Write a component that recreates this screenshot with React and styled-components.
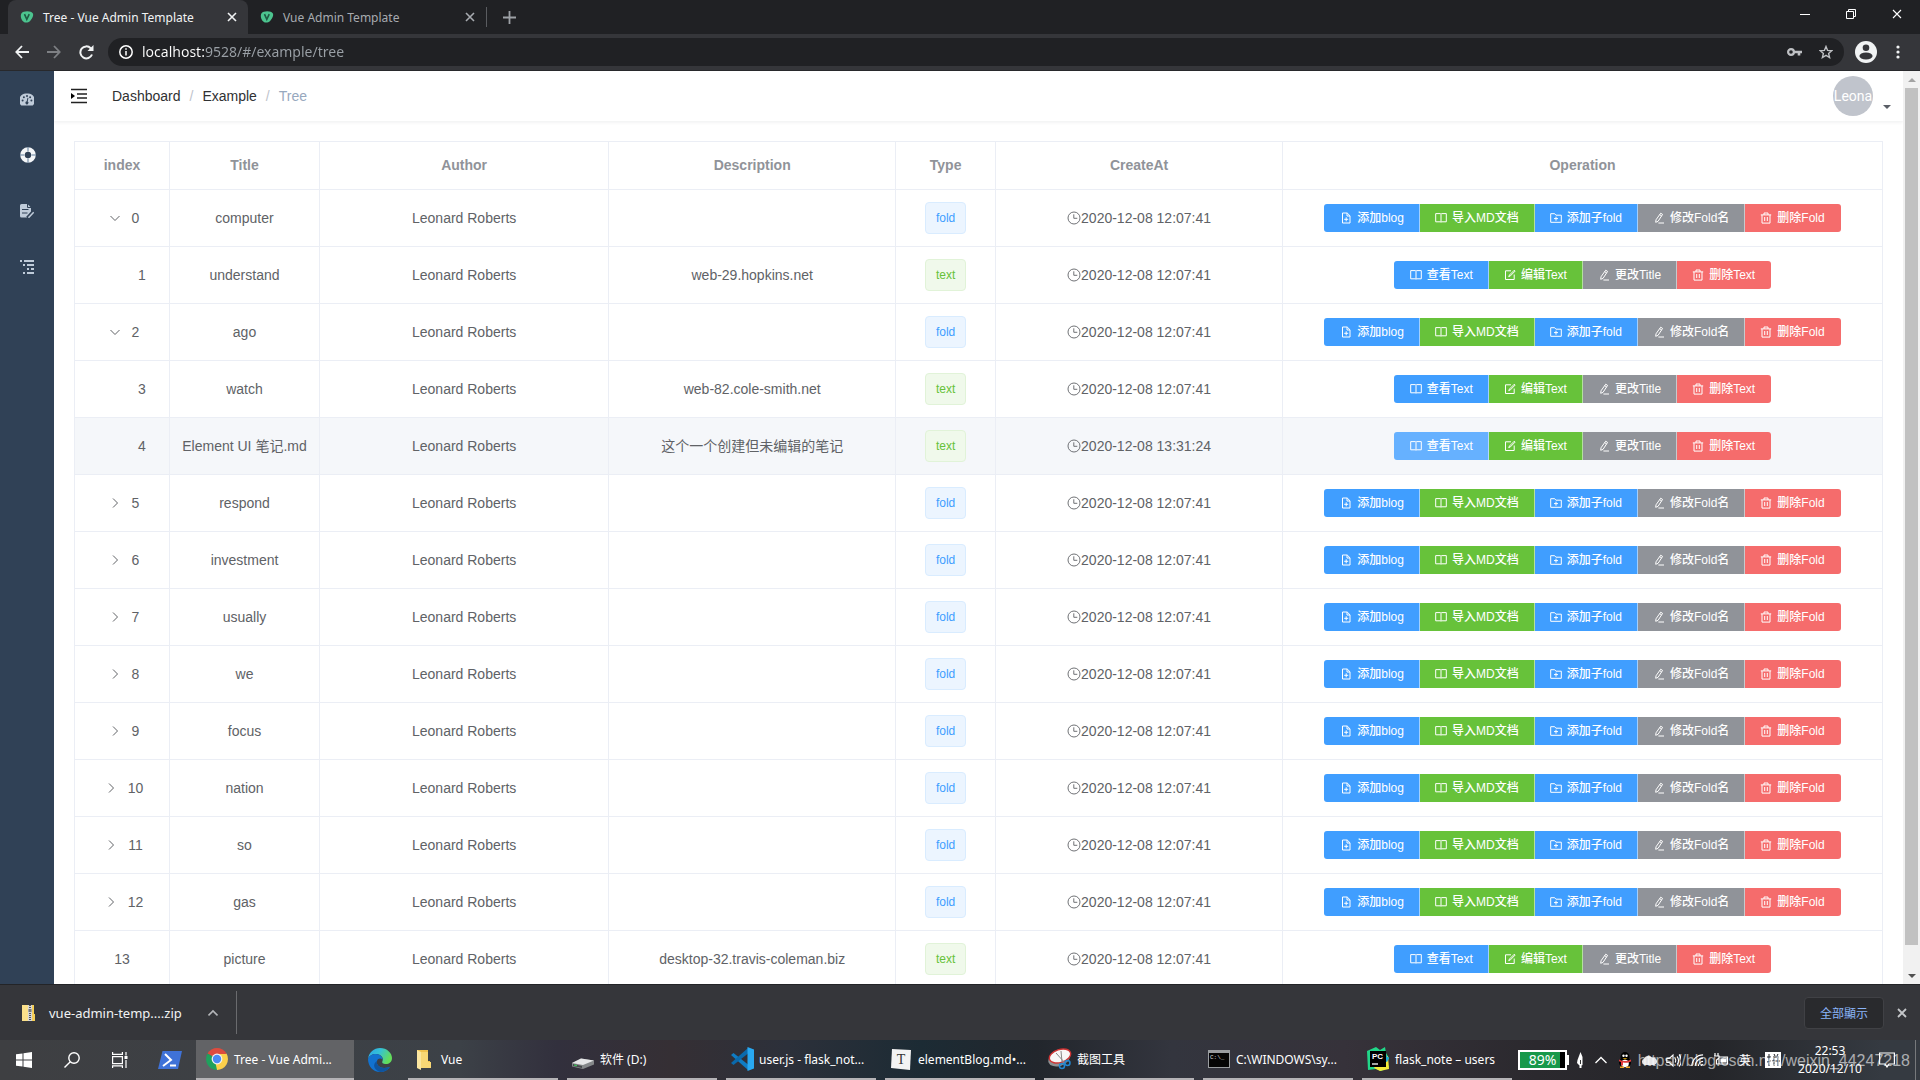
import React from 'react';
import styled, { createGlobalStyle, css } from 'styled-components';

const GlobalStyle = createGlobalStyle`
  * {
    box-sizing: border-box;
  }

  body {
    margin: 0;
    background: #fff;
    color: #606266;
    font-family: 'Liberation Sans', 'Noto Sans CJK SC', sans-serif;
    font-size: 14px;
  }

  button {
    margin: 0;
    padding: 0;
    border: 0;
    background: none;
    color: inherit;
    font: inherit;
    cursor: pointer;
  }

  a {
    color: inherit;
    text-decoration: none;
  }

  svg {
    display: block;
    flex: none;
  }
`;

const uiFont = css`
  font-family: 'Noto Sans', 'Noto Sans CJK SC', sans-serif;
`;

/* ---------- Window frame ---------- */

const Screen = styled.div`
  display: flex;
  flex-direction: column;
  height: 100vh;
  overflow: hidden;
`;

const TabStrip = styled.header`
  ${uiFont}
  display: flex;
  flex: none;
  height: 34px;
  padding-left: 8px;
  background: #202124;
  color: #9da1a6;
  font-size: 12px;
`;

const BrowserTab = styled.div`
  display: flex;
  align-items: center;
  width: ${(p) => (p.$active ? '240px' : '238px')};
  padding: 0 11px 0 12px;
  border-radius: 8px 8px 0 0;
  background: ${(p) => (p.$active ? '#35363a' : 'transparent')};
  color: ${(p) => (p.$active ? '#f1f3f4' : '#a7abb0')};
`;

const TabTitle = styled.button`
  flex: 1;
  display: flex;
  align-items: center;
  gap: 9px;
  height: 28px;
  white-space: nowrap;
`;

const TabDivider = styled.span`
  align-self: center;
  width: 1px;
  height: 20px;
  margin-right: 16px;
  background: #5a5c60;
`;

const WindowButtons = styled.div`
  display: flex;
  margin-left: auto;
  color: #fff;
`;

const WindowButton = styled.button`
  display: flex;
  align-items: center;
  justify-content: center;
  width: 46px;
  height: 28px;
`;

const Toolbar = styled.div`
  ${uiFont}
  display: flex;
  align-items: center;
  flex: none;
  height: 37px;
  padding: 0 6px;
  border-bottom: 1px solid #28292c;
  background: #35363a;
  color: #fff;
`;

const NavButton = styled.button`
  display: flex;
  align-items: center;
  justify-content: center;
  width: 32px;
  height: 28px;
  color: ${(p) => (p.$dim ? '#7e8084' : '#f1f3f4')};
`;

const ProfileButton = styled.button`
  margin-right: 5px;
`;

const Omnibox = styled.label`
  display: flex;
  align-items: center;
  flex: 1;
  gap: 9px;
  height: 28px;
  margin: 0 11px 0 6px;
  padding: 0 11px;
  border-radius: 14px;
  background: #202124;
`;

/* host part is bright, the rest of the url is dimmed */
const UrlInput = styled.input`
  ${uiFont}
  flex: 1;
  min-width: 0;
  padding: 0;
  border: 0;
  outline: 0;
  background: linear-gradient(90deg, #fff 62px, #9aa0a6 62px);
  background-clip: text;
  -webkit-text-fill-color: transparent;
  color: #fff;
  font-size: 14px;
  line-height: 20px;
`;

const OmniIcons = styled.span`
  display: flex;
  align-items: center;
  gap: 17px;
  color: #bfc1c4;
`;

/* ---------- Page ---------- */

const Page = styled.div`
  display: flex;
  flex: 1;
  min-height: 0;
`;

const Sidebar = styled.nav`
  flex: none;
  width: 54px;
  background: #304156;
`;

const SidebarLink = styled.a`
  display: flex;
  align-items: center;
  height: 56px;
  padding-left: 20px;
  color: ${(p) => (p.$bright ? '#f4f6f8' : '#bfcbd9')};
`;

const Main = styled.main`
  flex: 1;
  min-width: 0;
  overflow: hidden;
`;

const Navbar = styled.div`
  display: flex;
  align-items: center;
  height: 50px;
  padding: 0 12px 0 15px;
  background: #fff;
  box-shadow: 0 1px 4px rgba(0, 21, 41, 0.08);
`;

const Breadcrumb = styled.nav`
  display: flex;
  gap: 9px;
  margin-left: 23px;
  color: #303133;

  i {
    color: #c0c4cc;
    font-style: normal;
  }

  span {
    color: #97a8be;
  }
`;

const UserMenu = styled.button`
  display: flex;
  align-items: flex-end;
  gap: 10px;
  margin-left: auto;
`;

const Avatar = styled.span`
  display: flex;
  align-items: center;
  justify-content: center;
  width: 40px;
  height: 40px;
  border-radius: 50%;
  overflow: hidden;
  background: #c0c4cc;
  color: #fff;
  font-family: Roboto, sans-serif;
`;

const Caret = styled.span`
  margin-bottom: 7px;
  border: 4px solid transparent;
  border-top-color: #5a5e66;
  border-bottom: 0;
`;

const TableWrap = styled.section`
  padding: 20px;
`;

const Table = styled.table`
  width: 100%;
  table-layout: fixed;
  border-spacing: 0;
  border-top: 1px solid #ebeef5;
  border-left: 1px solid #ebeef5;
  line-height: 23px;
  text-align: center;
`;

const Th = styled.th`
  width: ${(p) => p.$width || 'auto'};
  padding: 12px 10px;
  border-right: 1px solid #ebeef5;
  border-bottom: 1px solid #ebeef5;
  color: #909399;
`;

const Row = styled.tr`
  background: ${(p) => (p.$hover ? '#f5f7fa' : '#fff')};
`;

const Td = styled.td`
  height: 57px;
  padding: 0 10px;
  border-right: 1px solid #ebeef5;
  border-bottom: 1px solid #ebeef5;
  white-space: nowrap;
`;

const IndexContent = styled.div`
  display: flex;
  align-items: center;
  justify-content: center;
  padding-left: ${(p) => (p.$nested ? '40px' : '0')};
`;

const Expander = styled.button`
  display: flex;
  align-items: center;
  justify-content: center;
  width: 20px;
  height: 20px;
  margin-right: 7px;

  svg {
    transform: ${(p) => (p.$open ? 'rotate(90deg)' : 'none')};
  }
`;

const Tag = styled.span`
  display: inline-block;
  height: 32px;
  padding: 0 10px;
  border: 1px solid ${(p) => (p.$kind === 'fold' ? '#d9ecff' : '#e1f3d8')};
  border-radius: 4px;
  background: ${(p) => (p.$kind === 'fold' ? '#ecf5ff' : '#f0f9eb')};
  color: ${(p) => (p.$kind === 'fold' ? '#409eff' : '#67c23a')};
  font-size: 12px;
  line-height: 30px;
  vertical-align: middle;
`;

const Created = styled.span`
  display: flex;
  align-items: center;
  justify-content: center;
`;

const ButtonGroup = styled.div`
  display: flex;
  justify-content: center;
`;

const tones = {
  primary: '#409eff',
  primaryHover: '#66b1ff',
  success: '#67c23a',
  info: '#909399',
  danger: '#f56c6c',
};

const ActionButton = styled.button`
  display: flex;
  align-items: center;
  gap: 5px;
  height: 28px;
  padding: 0 15px;
  border-right: 1px solid rgba(255, 255, 255, 0.5);
  background: ${(p) => tones[p.$tone]};
  color: #fff;
  font-size: 12px;
  font-weight: 500;
  line-height: 12px;

  &:first-child {
    padding-left: 16px;
    border-radius: 3px 0 0 3px;
  }

  &:last-child {
    padding-right: 16px;
    border-right: 0;
    border-radius: 0 3px 3px 0;
  }
`;

const Scrollbar = styled.div`
  display: flex;
  flex-direction: column;
  flex: none;
  width: 17px;
  background: #f1f1f1;
`;

const ScrollArrow = styled.button`
  display: flex;
  align-items: center;
  justify-content: center;
  height: 17px;
  color: ${(p) => (p.$dim ? '#a3a3a3' : '#505050')};
`;

const ScrollTrack = styled.div`
  flex: 1;
  padding: 0 2px;
`;

const ScrollThumb = styled.div`
  height: 97.5%;
  background: #c1c1c1;
`;

/* ---------- Downloads ---------- */

const DownloadBar = styled.footer`
  ${uiFont}
  display: flex;
  align-items: center;
  flex: none;
  height: 56px;
  padding: 0 13px 0 20px;
  border-top: 1px solid #232427;
  background: #35363a;
  color: #f1f3f4;
`;

const DownloadItem = styled.div`
  display: flex;
  align-items: center;
  width: 217px;
  height: 43px;
  padding-right: 18px;
  border-right: 1px solid #6a6b6e;
  font-size: 13px;

  a {
    flex: 1;
    margin-left: 13px;
  }

  button {
    color: #b4b6b9;
  }
`;

const ShowAll = styled.button`
  width: 80px;
  height: 32px;
  margin-left: auto;
  margin-right: 13px;
  border: 1px solid #404145;
  border-radius: 4px;
  background: #292a2d;
  color: #8ab4f8;
  font-size: 12px;
`;

const CloseBar = styled.button`
  color: #c4c6c9;
`;

/* ---------- Taskbar ---------- */

const Taskbar = styled.div`
  ${uiFont}
  position: relative;
  display: flex;
  flex: none;
  height: 40px;
  background: linear-gradient(
    90deg,
    #3e3f42 0%,
    #3c4147 24%,
    #32303d 29%,
    #352f34 35%,
    #2c303a 41%,
    #1c2b34 48%,
    #22262c 54%,
    #33353e 61%,
    #36323a 70%,
    #2b292e 80%,
    #242529 89%,
    #353a41 98%
  );
  color: #fff;
  font-size: 12px;
`;

const TaskIcon = styled.button`
  display: flex;
  align-items: center;
  justify-content: center;
  width: ${(p) => (p.$wide ? '51px' : '48px')};
`;

const TaskList = styled.div`
  display: flex;
  gap: 9px;
  margin-left: 3px;
`;

const TaskItem = styled.button`
  display: flex;
  align-items: center;
  gap: 5px;
  width: ${(p) => (p.$active ? '158px' : '150px')};
  margin-left: ${(p) => (p.$active ? '1px' : '0')};
  padding: 0 ${(p) => (p.$active ? '9px' : '4px')};
  border-bottom: 2px solid #b5b3b6;
  background: ${(p) => (p.$active ? '#626366' : 'transparent')};
  white-space: nowrap;
`;

const Tray = styled.div`
  display: flex;
  align-items: center;
  margin-left: auto;
`;

const Battery = styled.span`
  width: 49px;
  height: 20px;
  border: 2px solid #fff;
  background: linear-gradient(90deg, #18984a 88%, #000 88%);
  font-size: 14px;
  line-height: 16px;
  text-align: center;
`;

const BatteryNub = styled.span`
  width: 2px;
  height: 10px;
  margin-right: 2px;
  background: #fff;
`;

const TrayIcon = styled.button`
  display: flex;
  align-items: center;
  justify-content: center;
  width: ${(p) => p.$width || 24}px;
  height: 40px;
`;

const Clock = styled.time`
  width: 82px;
  font-size: 12px;
  line-height: 18px;
  text-align: center;
`;

const PeekEdge = styled.span`
  width: 1px;
  height: 40px;
  margin: 0 4px 0 12px;
  background: #77797c;
`;

const Watermark = styled.span`
  position: absolute;
  right: 10px;
  top: 10px;
  color: rgba(255, 255, 255, 0.6);
  font-family: 'Liberation Sans', sans-serif;
  font-size: 16px;
  line-height: 22px;
  pointer-events: none;
`;

/* ---------- Icons ---------- */

const Stroke = ({ size = 12, box = 12, w = 1, children, ...rest }) => (
  <svg
    width={size}
    height={size}
    viewBox={`0 0 ${box} ${box}`}
    fill="none"
    stroke="currentColor"
    strokeWidth={w}
    aria-hidden="true"
    {...rest}
  >
    {children}
  </svg>
);

const CloseIcon = ({ size = 10, w = 1.6 }) => (
  <Stroke size={size} box={10} w={w}><path d="M1 1l8 8M9 1L1 9" /></Stroke>
);

const Favicon = () => (
  <svg width="14" height="14" viewBox="0 0 15 14" aria-hidden="true">
    <path d="M4 1.400C7.500 0 12.500 .8 13.800 3.200c1 2-.6 5.600-3 8-1.900 1.900-5 2.500-7 .9C1.700 10.500.6 7.800.9 5.200 1.100 3.300 2.200 2 4 1.400z" fill="#4cc48f" />
    <path d="M4.800 4l2.500 5.500L9.900 4" fill="none" stroke="#1f5a43" strokeWidth="1.700" />
  </svg>
);

const actionIcons = {
  docAdd: <path d="M2.500 1h4.700l2.800 2.800V11h-7.500zM7 1v3h3M4.200 7.300h4M6.200 5.300v4" />,
  reading: <path d="M.7 1.600h4.600l.7.600.7-.6h4.600v8.200H6.700l-.7.600-.7-.6H.7zM6 2.200v8" />,
  folderAdd: <path d="M.7 1.700h4l1.200 1.500h5.400v7.100H.7zM4 6.600h4M6 4.700v4" />,
  edit: <path d="M7.700 1.200l1.900 1.200-4.600 7-2.300.9.300-2.500zM6.700 2.700l1.900 1.200M5.400 11h5.600" />,
  editOutline: <path d="M7 1.800H1.500v8.700h8.700V5.500M10.300 1.200L5.500 6l-.8 1.600 1.700-.7 4.700-4.800z" />,
  trash: <path d="M.8 2.900h10.400M4 2.900V1h4v1.900M2 2.900v8.200h8V2.900M4.700 5v4M7.300 5v4" />,
};

const ClockIcon = () => (
  <Stroke size={14} box={14} w={0.9}>
    <circle cx="7" cy="7" r="6" />
    <path d="M6.800 3.300v4h3.500" />
  </Stroke>
);

const DashboardIcon = () => (
  <svg width="14" height="13" viewBox="0 0 14 13" aria-hidden="true">
    <path d="M1.300 12.500A7 7 0 0 1 7 .5a7 7 0 0 1 5.700 12z" fill="currentColor" />
    <g fill="#304156">
      <circle cx="2.600" cy="7.500" r="1" />
      <circle cx="3.900" cy="4.300" r="1" />
      <circle cx="7" cy="2.900" r="1" />
      <circle cx="10.100" cy="4.300" r="1" />
      <circle cx="11.400" cy="7.500" r="1" />
      <path d="M7.500 4.700l.9.300-.7 3.500a1.500 1.500 0 1 1-1-.2z" />
    </g>
  </svg>
);

const LifebuoyIcon = () => (
  <svg width="16" height="16" viewBox="0 0 16 16" aria-hidden="true">
    <circle cx="8" cy="8" r="5.500" fill="none" stroke="currentColor" strokeWidth="4.600" />
    <path d="M8 0v4.500M8 11.500V16M0 8h4.500M11.500 8H16" stroke="#5e7c9b" strokeWidth="1" />
  </svg>
);

const FormIcon = () => (
  <svg width="14" height="14" viewBox="0 0 14 14" aria-hidden="true">
    <path d="M1.500 0H7.500L11 3.500V8.500L7 13.500H1.500A1.500 1.500 0 0 1 0 12V1.500A1.500 1.500 0 0 1 1.500 0z" fill="currentColor" />
    <path d="M7.500 0v3.500H11M2 5.500h6.500M2 9h5.500" stroke="#304156" fill="none" />
    <path d="M7.500 14L13 8" stroke="#304156" strokeWidth="3.500" />
    <path d="M8.500 13.700L13.700 8.200" stroke="currentColor" strokeWidth="1.600" />
  </svg>
);

const TreeIcon = () => (
  <svg width="14" height="14" viewBox="0 0 14 14" fill="currentColor" aria-hidden="true">
    <path d="M0 0h2v2H0zM4 0h10v2H4zM3 4h2v2H3zM7 4h7v2H7zM7 8h2v2H7zM11 8h3v2h-3zM3 12h2v2H3zM7 12h7v2H7z" />
  </svg>
);

const HamburgerIcon = () => (
  <svg width="20" height="16" viewBox="0 0 20 16" aria-hidden="true">
    <path d="M2 1.500h16M8 6h10M8 10h10M2 14.500h16" stroke="#222" strokeWidth="1.500" />
    <path d="M2 5l4 3-4 3z" fill="#000" />
  </svg>
);

const ZipIcon = () => (
  <svg width="16" height="16" viewBox="0 0 16 16" aria-hidden="true">
    <path d="M2 0h12v9h1v7H2z" fill="#f6cf57" />
    <path d="M2 0h6v16H2z" fill="#fbe08a" />
    <path d="M8 0h4v16H8z" fill="#d8d8d8" />
    <path d="M10 0v16" stroke="#555" strokeWidth="2" strokeDasharray="1 1" />
    <path d="M8.500 4h3v3h-3z" fill="#777" />
  </svg>
);

const taskIcons = {
  chrome: (
    <svg width="24" height="24" viewBox="0 0 24 24" aria-hidden="true">
      <path d="M12 12L2.500 6.500A11 11 0 0 1 21.500 6.500z" fill="#dd4b3e" />
      <path d="M12 12l9.500-5.500A11 11 0 0 1 12 23z" fill="#fdd04b" />
      <path d="M12 12v11A11 11 0 0 1 2.500 6.500z" fill="#1fa15d" />
      <path d="M12 7h9.800L17 13.500z" fill="#fdd04b" />
      <path d="M16.500 14.500L12 23l-1.500-7z" fill="#fdd04b" />
      <circle cx="12" cy="12" r="5.400" fill="#f2f2f2" />
      <circle cx="12" cy="12" r="4.200" fill="#4a8af4" />
    </svg>
  ),
  folder: (
    <svg width="24" height="24" viewBox="0 0 24 24" aria-hidden="true">
      <path d="M5 3h11v11h2v7H5z" fill="#f0c24e" />
      <path d="M5 3l4 2v18l-4-2z" fill="#fbe6a0" />
      <path d="M9 5h7v10h3v6H9z" fill="#f8d775" />
    </svg>
  ),
  drive: (
    <svg width="24" height="24" viewBox="0 0 24 24" aria-hidden="true">
      <path d="M1 16l9-4.500 13 2v4L12 22 1 19.500z" fill="#85888a" />
      <path d="M1 16l9-4.500 13 2L12 18z" fill="#e6e7e8" />
      <path d="M2 17l9 2v2l-9-2z" fill="#45494b" />
      <path d="M3 18l3 .7" stroke="#38d25a" />
    </svg>
  ),
  vscode: (
    <svg width="24" height="24" viewBox="0 0 24 24" aria-hidden="true">
      <path d="M1 8l2.500-2L18 17.500V23z" fill="#0f7cc4" />
      <path d="M1 16l2.500 2L18 6.500V1z" fill="#0a6aad" />
      <path d="M17.500 0L24 2.500v19L17.500 24z" fill="#29a8f1" />
    </svg>
  ),
  typora: (
    <svg width="24" height="24" viewBox="0 0 24 24" aria-hidden="true">
      <path d="M3 2l19 1-1 20-19-2z" fill="#f3f3f3" />
      <text x="12" y="17" textAnchor="middle" fontFamily="Liberation Serif, serif" fontSize="14" fill="#333">T</text>
    </svg>
  ),
  snip: (
    <svg width="24" height="24" viewBox="0 0 24 24" aria-hidden="true">
      <ellipse cx="11" cy="12" rx="11" ry="7" transform="rotate(-18 11 12)" fill="#8d9092" />
      <ellipse cx="12" cy="9" rx="11" ry="6.500" transform="rotate(-18 12 9)" fill="#f7f7f7" stroke="#cf3434" strokeWidth="1.400" />
      <path d="M8 6l9 10M13 4l1 11" stroke="#888" />
      <circle cx="14" cy="19" r="2.500" fill="none" stroke="#2386d1" strokeWidth="1.500" />
      <circle cx="19.500" cy="16" r="2.500" fill="none" stroke="#2386d1" strokeWidth="1.500" />
    </svg>
  ),
  cmd: (
    <svg width="24" height="24" viewBox="0 0 24 24" aria-hidden="true">
      <path d="M1 3h22v18H1z" fill="#9a9da0" />
      <path d="M2 6h20v14H2z" fill="#050505" />
      <text x="3" y="12" fontFamily="Liberation Mono, monospace" fontSize="6" fill="#ddd">C:\_</text>
    </svg>
  ),
  pycharm: (
    <svg width="24" height="24" viewBox="0 0 24 24" aria-hidden="true">
      <path d="M1 4l9-4 4 3 5-3 1 6 3 5-2 4 2 5-8 4-5-2-8 1z" fill="#21d789" />
      <path d="M13 14l9-5 1 13-9 2-6-3z" fill="#f4ec3a" />
      <path d="M18 7l5 4-2 4-3-1z" fill="#1aa8d8" />
      <path d="M4 4h16v16H4z" fill="#000" />
      <text x="6" y="12" fontFamily="Liberation Sans, sans-serif" fontSize="8" fontWeight="700" fill="#fff">PC</text>
      <path d="M6 17h6" stroke="#fff" strokeWidth="1.300" />
    </svg>
  ),
};

/* ---------- Data ---------- */

const folderActions = [
  { icon: 'docAdd', label: '添加blog', tone: 'primary' },
  { icon: 'reading', label: '导入MD文档', tone: 'success' },
  { icon: 'folderAdd', label: '添加子fold', tone: 'primary' },
  { icon: 'edit', label: '修改Fold名', tone: 'info' },
  { icon: 'trash', label: '删除Fold', tone: 'danger' },
];

const textActions = [
  { icon: 'reading', label: '查看Text', tone: 'primary' },
  { icon: 'editOutline', label: '编辑Text', tone: 'success' },
  { icon: 'edit', label: '更改Title', tone: 'info' },
  { icon: 'trash', label: '删除Text', tone: 'danger' },
];

const defaultDate = '2020-12-08 12:07:41';

const rows = [
  { title: 'computer', type: 'fold', open: true },
  { title: 'understand', type: 'text', nested: true, description: 'web-29.hopkins.net' },
  { title: 'ago', type: 'fold', open: true },
  { title: 'watch', type: 'text', nested: true, description: 'web-82.cole-smith.net' },
  {
    title: 'Element UI 笔记.md',
    type: 'text',
    nested: true,
    description: '这个一个创建但未编辑的笔记',
    createdAt: '2020-12-08 13:31:24',
    hover: true,
  },
  { title: 'respond', type: 'fold' },
  { title: 'investment', type: 'fold' },
  { title: 'usually', type: 'fold' },
  { title: 'we', type: 'fold' },
  { title: 'focus', type: 'fold' },
  { title: 'nation', type: 'fold' },
  { title: 'so', type: 'fold' },
  { title: 'gas', type: 'fold' },
  { title: 'picture', type: 'text', description: 'desktop-32.travis-coleman.biz' },
];

const columns = [
  { name: 'index', width: '95px' },
  { name: 'Title', width: '150px' },
  { name: 'Author', width: '16%' },
  { name: 'Description' },
  { name: 'Type', width: '100px' },
  { name: 'CreateAt' },
  { name: 'Operation', width: '600px' },
];

const tasks = [
  { icon: 'folder', label: 'Vue' },
  { icon: 'drive', label: '软件 (D:)' },
  { icon: 'vscode', label: 'user.js - flask_not...' },
  { icon: 'typora', label: 'elementBlog.md•...' },
  { icon: 'snip', label: '截图工具' },
  { icon: 'cmd', label: 'C:\\WINDOWS\\sy...' },
  { icon: 'pycharm', label: 'flask_note – users' },
];

/* ---------- Sections ---------- */

const BrowserChrome = () => (
  <>
    <TabStrip>
      <BrowserTab $active>
        <TabTitle><Favicon />Tree - Vue Admin Template</TabTitle>
        <button aria-label="Close tab"><CloseIcon /></button>
      </BrowserTab>
      <BrowserTab>
        <TabTitle><Favicon />Vue Admin Template</TabTitle>
        <button aria-label="Close tab"><CloseIcon /></button>
      </BrowserTab>
      <TabDivider />
      <button aria-label="New tab">
        <Stroke size={13} box={13} w={1.8}><path d="M6.500 0v13M0 6.500h13" /></Stroke>
      </button>
      <WindowButtons>
        <WindowButton aria-label="Minimize">
          <Stroke size={10} box={10}><path d="M0 5.500h10" /></Stroke>
        </WindowButton>
        <WindowButton aria-label="Restore">
          <Stroke size={10} box={10}><path d="M.5 2.500h7v7h-7zM2.500 2V.5h7v7H8" /></Stroke>
        </WindowButton>
        <WindowButton aria-label="Close"><CloseIcon w={1.1} /></WindowButton>
      </WindowButtons>
    </TabStrip>
    <Toolbar>
      <NavButton aria-label="Back">
        <Stroke size={14} box={14} w={1.8}><path d="M14 7H1.500M7 1L1.300 7 7 13" /></Stroke>
      </NavButton>
      <NavButton aria-label="Forward" $dim>
        <Stroke size={14} box={14} w={1.8}><path d="M0 7h12.500M7 1l5.700 6L7 13" /></Stroke>
      </NavButton>
      <NavButton aria-label="Reload">
        <Stroke size={15} box={15} w={2}>
          <path d="M13 9.500A6 6 0 1 1 11.700 3.200L13 4.500" />
          <path d="M14.500 0v6h-6z" fill="currentColor" stroke="none" />
        </Stroke>
      </NavButton>
      <Omnibox>
        <Stroke size={14} box={14} w={1.5}>
          <circle cx="7" cy="7" r="6.200" />
          <path d="M7 6v4.500M7 3.200v1.600" />
        </Stroke>
        <UrlInput aria-label="Address" defaultValue="localhost:9528/#/example/tree" />
        <OmniIcons>
          <svg width="15" height="10" viewBox="0 0 15 10" fill="none" stroke="currentColor" strokeWidth="2.200" aria-hidden="true">
            <circle cx="4" cy="5" r="2.900" />
            <path d="M7 5h8M12 5v3.500" strokeWidth="2.600" />
          </svg>
          <Stroke size={14} box={14} w={1.4}>
            <path d="M7 1.500l1.600 3.900 4.200.3-3.200 2.700 1 4.100L7 10.300l-3.600 2.200 1-4.100-3.200-2.700 4.200-.3z" />
          </Stroke>
        </OmniIcons>
      </Omnibox>
      <ProfileButton aria-label="Profile">
        <svg width="22" height="22" viewBox="0 0 22 22" aria-hidden="true">
          <circle cx="11" cy="11" r="11" fill="#f1f3f4" />
          <circle cx="11" cy="6.800" r="3.300" fill="#35363a" />
          <ellipse cx="11" cy="15" rx="6.600" ry="3.500" fill="#35363a" />
        </svg>
      </ProfileButton>
      <NavButton aria-label="Menu">
        <svg width="4" height="14" viewBox="0 0 4 14" fill="currentColor" aria-hidden="true">
          <circle cx="2" cy="2" r="1.600" />
          <circle cx="2" cy="7" r="1.600" />
          <circle cx="2" cy="12" r="1.600" />
        </svg>
      </NavButton>
    </Toolbar>
  </>
);

const TreeRow = ({ row, index }) => {
  const actions = row.type === 'fold' ? folderActions : textActions;

  return (
    <Row $hover={row.hover}>
      <Td>
        <IndexContent $nested={row.nested}>
          {row.type === 'fold' && (
            <Expander $open={row.open} aria-label={row.open ? 'Collapse' : 'Expand'}>
              <Stroke><path d="M4 1.500L8.500 6 4 10.500" /></Stroke>
            </Expander>
          )}
          {index}
        </IndexContent>
      </Td>
      <Td>{row.title}</Td>
      <Td>Leonard Roberts</Td>
      <Td>{row.description}</Td>
      <Td><Tag $kind={row.type}>{row.type}</Tag></Td>
      <Td>
        <Created><ClockIcon />{row.createdAt || defaultDate}</Created>
      </Td>
      <Td>
        <ButtonGroup>
          {actions.map((action, i) => (
            <ActionButton
              key={action.label}
              $tone={row.hover && i === 0 ? 'primaryHover' : action.tone}
            >
              <Stroke w={1}>{actionIcons[action.icon]}</Stroke>
              {action.label}
            </ActionButton>
          ))}
        </ButtonGroup>
      </Td>
    </Row>
  );
};

const AdminPage = () => (
  <Page>
    <Sidebar>
      <SidebarLink href="#/dashboard" aria-label="Dashboard"><DashboardIcon /></SidebarLink>
      <SidebarLink href="#/example" aria-label="Example" $bright><LifebuoyIcon /></SidebarLink>
      <SidebarLink href="#/form" aria-label="Form"><FormIcon /></SidebarLink>
      <SidebarLink href="#/nested" aria-label="Nested"><TreeIcon /></SidebarLink>
    </Sidebar>
    <Main>
      <Navbar>
        <button aria-label="Toggle sidebar"><HamburgerIcon /></button>
        <Breadcrumb aria-label="Breadcrumb">
          <a href="#/dashboard">Dashboard</a>
          <i>/</i>
          <a href="#/example">Example</a>
          <i>/</i>
          <span>Tree</span>
        </Breadcrumb>
        <UserMenu aria-label="User menu">
          <Avatar>Leona</Avatar>
          <Caret />
        </UserMenu>
      </Navbar>
      <TableWrap>
        <Table>
          <thead>
            <tr>
              {columns.map((col) => (
                <Th key={col.name} $width={col.width}>{col.name}</Th>
              ))}
            </tr>
          </thead>
          <tbody>
            {rows.map((row, i) => (
              <TreeRow key={row.title} row={row} index={i} />
            ))}
          </tbody>
        </Table>
      </TableWrap>
    </Main>
    <Scrollbar>
      <ScrollArrow aria-label="Scroll up" $dim>
        <svg width="8" height="4" viewBox="0 0 8 4" aria-hidden="true"><path d="M0 4l4-4 4 4z" fill="currentColor" /></svg>
      </ScrollArrow>
      <ScrollTrack><ScrollThumb /></ScrollTrack>
      <ScrollArrow aria-label="Scroll down">
        <svg width="8" height="4" viewBox="0 0 8 4" aria-hidden="true"><path d="M0 0l4 4 4-4z" fill="currentColor" /></svg>
      </ScrollArrow>
    </Scrollbar>
  </Page>
);

const Downloads = () => (
  <DownloadBar>
    <DownloadItem>
      <ZipIcon />
      <a href="#download">vue-admin-temp....zip</a>
      <button aria-label="Download options">
        <Stroke size={10} box={10} w={1.6}><path d="M.5 7.500L5 3l4.500 4.500" /></Stroke>
      </button>
    </DownloadItem>
    <ShowAll>全部顯示</ShowAll>
    <CloseBar aria-label="Close downloads"><CloseIcon w={1.8} /></CloseBar>
  </DownloadBar>
);

const WindowsTaskbar = () => (
  <Taskbar>
    <TaskIcon aria-label="Start">
      <svg width="16" height="16" viewBox="0 0 16 16" fill="#fff" aria-hidden="true">
        <path d="M0 2.300L6.500 1.400v6.100H0zM7.500 1.200L16 0v7.500H7.500zM0 8.500h6.500v6.100L0 13.700zM7.500 8.500H16V16l-8.500-1.200z" />
      </svg>
    </TaskIcon>
    <TaskIcon aria-label="Search">
      <Stroke size={16} box={16} w={1.4}><circle cx="10" cy="6" r="5.200" /><path d="M6.300 9.700L.5 15.500" /></Stroke>
    </TaskIcon>
    <TaskIcon aria-label="Task view">
      <Stroke size={16} box={16} w={1.2}>
        <path d="M.6 4.600h9.800v7H.6zM.6 0v2.400h9.800V0M.6 16v-2.200h9.800V16M14 0v3.500M14 8v8" />
        <path d="M12.500 4h3v3h-3z" fill="currentColor" stroke="none" />
      </Stroke>
    </TaskIcon>
    <TaskIcon aria-label="PowerShell" $wide>
      <svg width="24" height="18" viewBox="0 0 24 18" aria-hidden="true">
        <path d="M4.500 0H24l-4 18H0z" fill="#3f72d8" />
        <path d="M7 3l6 6-8 6M12 14.500h6" fill="none" stroke="#fff" strokeWidth="2" />
      </svg>
    </TaskIcon>
    <TaskItem $active>{taskIcons.chrome}Tree - Vue Admi...</TaskItem>
    <TaskIcon aria-label="Edge" $wide>
      <svg width="24" height="24" viewBox="0 0 24 24" aria-hidden="true">
        <defs>
          <linearGradient id="edgeTop" x1="0" y1="0" x2="1" y2="0.400">
            <stop offset="0" stopColor="#2aa4e8" />
            <stop offset="0.500" stopColor="#35c1d6" />
            <stop offset="1" stopColor="#63dd5a" />
          </linearGradient>
        </defs>
        <path d="M0 11C1 4 6 0 12 0c7 0 12 5 12 10 0 4-3 6-6 6-3 0-4.500-1-3.500-3C16 10 13 6 8 6c-4 0-7 2-8 5z" fill="url(#edgeTop)" />
        <path d="M0 11c1-3 4-5 8-5 4 0 7 3 6.500 6-1.500-2-4.500-2-5.500 1-1 4 3 7 7 7 3 0 5-1 6-1-2 3-6 5-10 5C5 24 0 18 0 11z" fill="#1272cf" />
        <path d="M9 13c-1 4 3 7 7 7 3 0 5-1 6-1-2 3-6 5-10 5-6-2-8-8-3-11z" fill="#0f549e" />
      </svg>
    </TaskIcon>
    <TaskList>
      {tasks.map((task) => (
        <TaskItem key={task.label}>{taskIcons[task.icon]}{task.label}</TaskItem>
      ))}
    </TaskList>
    <Tray>
      <Battery>89%</Battery>
      <BatteryNub />
      <TrayIcon $width={18} aria-label="Pen">
        <svg width="8" height="16" viewBox="0 0 8 16" aria-hidden="true"><path d="M4.500 0L6.500 5v8l-1 .5V16h-2v-2.500L1 11 1.500 8z" fill="#fff" /><path d="M4.500 8v4" stroke="#333" /></svg>
      </TrayIcon>
      <TrayIcon aria-label="Hidden icons">
        <Stroke w={1.3}><path d="M.5 9L6 3.500 11.500 9" /></Stroke>
      </TrayIcon>
      <TrayIcon aria-label="QQ">
        <svg width="16" height="16" viewBox="0 0 16 16" aria-hidden="true">
          <ellipse cx="8" cy="5" rx="4.500" ry="5" fill="#000" />
          <ellipse cx="8" cy="10.500" rx="6" ry="5" fill="#000" />
          <ellipse cx="8" cy="11.500" rx="3.800" ry="3.800" fill="#fff" />
          <circle cx="6.500" cy="3.800" r="1.200" fill="#fff" />
          <circle cx="9.500" cy="3.800" r="1.200" fill="#fff" />
          <path d="M5.500 6.200h5l-2.500 1.300z" fill="#f5b400" />
          <path d="M2 7.500c4 2 8 2 12 0v2c-3 1.500-5 1.500-8 1v3H4v-3.500l-2-.8z" fill="#e33b3b" />
          <path d="M3 14.500h4V16H3zM9 14.500h4V16H9z" fill="#f5a623" />
        </svg>
      </TrayIcon>
      <TrayIcon aria-label="OneDrive">
        <svg width="16" height="10" viewBox="0 0 18 11" aria-hidden="true"><path d="M4 11a3.500 3.500 0 0 1-.5-6.800A5 5 0 0 1 12.500 3 4 4 0 0 1 15 11z" fill="#e4e4e6" /></svg>
      </TrayIcon>
      <TrayIcon aria-label="Volume">
        <Stroke size={15} box={15} w={1.1}><path d="M.8 5.500h2.500L7 2v11L3.300 9.500H.8zM9 5.500c1 1 1 3 0 4M11 3.500c2 2 2 6 0 8M13 1.500c3 3 3 9 0 12" /></Stroke>
      </TrayIcon>
      <TrayIcon aria-label="Network">
        <Stroke size={13} box={14} w={1.2}><path d="M1 13A12 12 0 0 1 13 1M4.500 13A8.500 8.500 0 0 1 13 4.500M8 13a5 5 0 0 1 5-5M11 13a2 2 0 0 1 2-2" /></Stroke>
      </TrayIcon>
      <TrayIcon aria-label="Power">
        <Stroke size={16} box={16} w={1.2}><path d="M6 5h8.500v7H6zM2 1v3M5 1v3M1 4h5v2L3.500 8v4H6" /><path d="M8 7h5v3H8z" fill="currentColor" /></Stroke>
      </TrayIcon>
      <TrayIcon>英</TrayIcon>
      <TrayIcon $width={32} aria-label="Input method">
        <svg width="16" height="16" viewBox="0 0 16 16" aria-hidden="true">
          <path d="M0 0h16v16H0z" fill="#fff" />
          <path d="M4 2v12M2 5h4M2 10l4-1M8 5h6M7 9h8M9 5v9M13 5v9M9 2l1 2M13 2l-1 2" stroke="#1d1e22" fill="none" />
        </svg>
      </TrayIcon>
      <Clock>22:53<br />2020/12/10</Clock>
      <TrayIcon $width={32} aria-label="Notifications">
        <Stroke size={16} box={16} w={1.2}><path d="M.6 1h14.800v11H10l-2 3-2-3H.6z" /></Stroke>
      </TrayIcon>
      <PeekEdge />
    </Tray>
    <Watermark>https://blog.csdn.net/weixin_44247218</Watermark>
  </Taskbar>
);

const App = () => (
  <>
    <GlobalStyle />
    <Screen>
      <BrowserChrome />
      <AdminPage />
      <Downloads />
      <WindowsTaskbar />
    </Screen>
  </>
);

export default App;
